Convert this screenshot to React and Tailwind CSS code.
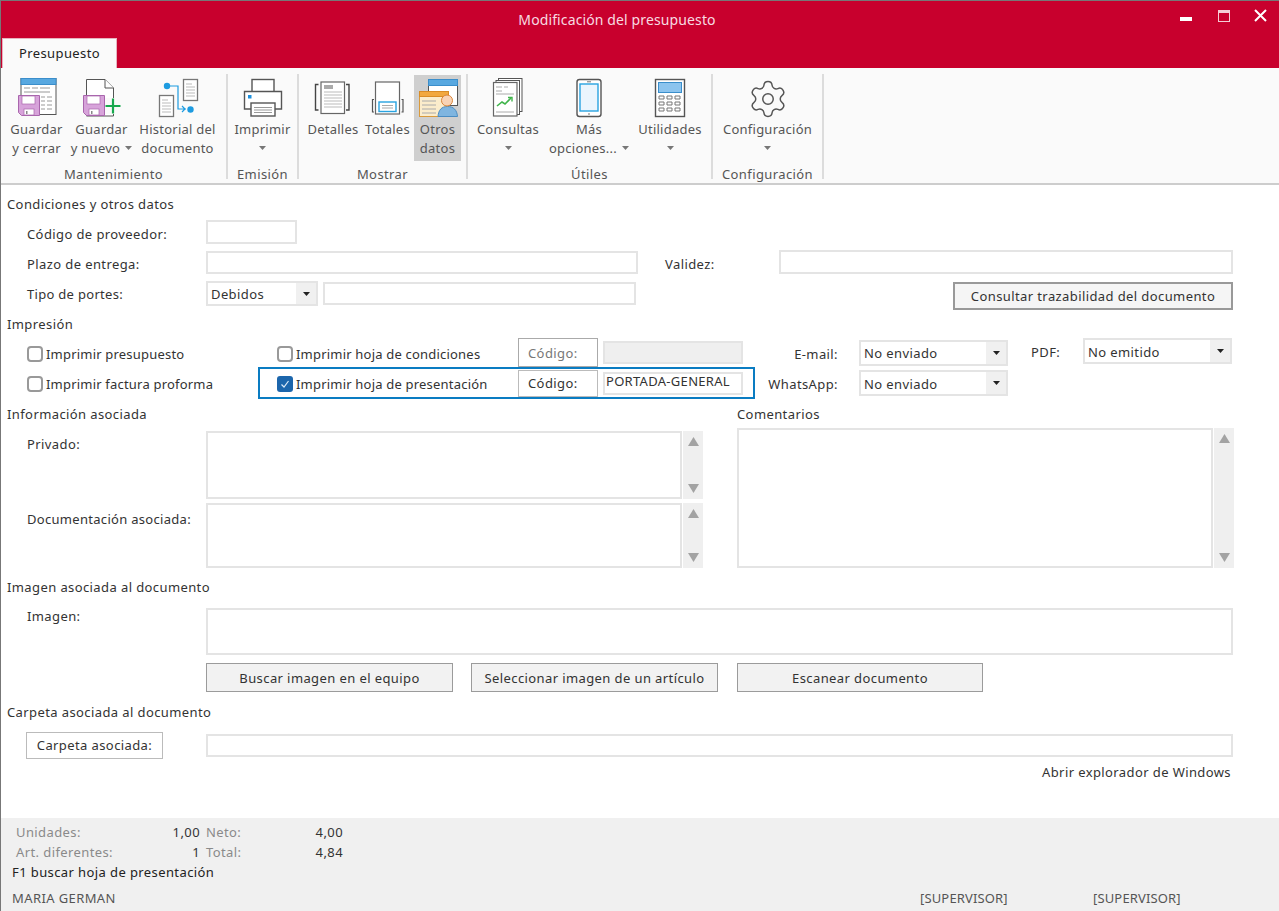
import React from "react";
import { Settings } from "lucide-react";

// --- ribbon icons, all drawn on a 44x44 box ---
const Floppy = ({ x = 3, y = 20 }) => (
  <g transform={`translate(${x} ${y})`}>
    <path d="M0.5 0.5H21.5V20.5H3.5L0.5 17.5Z" fill="#d7a3da" stroke="#a966ad" />
    <rect x="4" y="1" width="13" height="8" fill="#fff" stroke="#a966ad" strokeWidth="0.7" />
    <rect x="6" y="14" width="10" height="6" fill="#fff" stroke="#a966ad" strokeWidth="0.7" />
    <rect x="8" y="16" width="1.5" height="3" fill="#888" />
  </g>
);

const SaveCloseIcon = () => (
  <svg width="44" height="44" viewBox="0 0 44 44">
    <rect x="6" y="3.5" width="35" height="36" fill="#fff" stroke="#555" />
    <rect x="6" y="3.5" width="35" height="6" fill="#58a8e0" stroke="#3b8ecb" />
    <path d="M9 13h6M17 13h6M25 13h10M9 17h26M26 22h4M32 22h5M26 26h4M32 26h5M26 30h4M32 30h5M26 34h4M32 34h5" stroke="#999" strokeWidth="1" />
    <Floppy />
  </svg>
);

const SaveNewIcon = () => (
  <svg width="44" height="44" viewBox="0 0 44 44">
    <path d="M6.5 4.5H25L33.5 13V41H6.5Z" fill="#fff" stroke="#555" />
    <path d="M25 4.5V13H33.5" fill="#fff" stroke="#555" />
    <Floppy x={3} y={20} />
    <rect x="25" y="23" width="17" height="16" fill="#fafafa" />
    <path d="M33 23.5V38.5M25.5 31H40.5" stroke="#18a84e" strokeWidth="2.2" />
  </svg>
);

const HistoryIcon = () => (
  <svg width="44" height="44" viewBox="0 0 44 44">
    <rect x="27.5" y="4.5" width="14" height="21" fill="#fff" stroke="#777" strokeWidth="1.3" />
    <path d="M30 9h6M30 12h9M30 15h9M30 18h9M30 21h9" stroke="#bbb" />
    <rect x="3.5" y="20.5" width="14" height="21" fill="#fff" stroke="#777" strokeWidth="1.3" />
    <path d="M6 25h6M6 28h9M6 31h9M6 34h9M6 37h9" stroke="#bbb" />
    <circle cx="11" cy="11" r="3.2" fill="#1d9be0" />
    <path d="M13 11H22V34H30M26 31l3 3-3 3" fill="none" stroke="#1d9be0" strokeWidth="1.2" />
    <circle cx="34.5" cy="34.5" r="3.2" fill="#1d9be0" />
  </svg>
);

const PrinterIcon = () => (
  <svg width="44" height="44" viewBox="0 0 44 44">
    <rect x="11" y="4.5" width="22" height="14" fill="#fff" stroke="#555" strokeWidth="1.4" />
    <path d="M3.5 16.5H40.5V34H3.5Z" fill="#fff" stroke="#555" strokeWidth="1.4" />
    <rect x="7" y="20" width="3.5" height="3.5" fill="#1d8fdc" />
    <rect x="10" y="28" width="24" height="13" fill="#fff" stroke="#555" strokeWidth="1.4" />
    <path d="M13 32.5H31M13 35H31M13 37.5H31" stroke="#999" />
  </svg>
);

const DetailsIcon = () => (
  <svg width="44" height="44" viewBox="0 0 44 44">
    <path d="M7.5 9.5H4.5V35H7.5M35 9.5H38V35H35" fill="none" stroke="#444" strokeWidth="1.4" />
    <rect x="10" y="7" width="23.5" height="31.5" fill="#fff" stroke="#666" strokeWidth="1.2" />
    <rect x="13" y="10" width="9" height="4" fill="#aaa" />
    <path d="M13 17H31M13 20H31M13 23H31M13 26H31M13 29H31M13 32H31" stroke="#bbb" />
  </svg>
);

const TotalsIcon = () => (
  <svg width="44" height="44" viewBox="0 0 44 44">
    <rect x="9.5" y="7" width="24" height="32" fill="#fff" stroke="#666" strokeWidth="1.2" />
    <path d="M8 24.5H6.5V37H8M35.5 24.5H37V37H35.5" fill="none" stroke="#555" strokeWidth="1.2" />
    <rect x="13" y="27" width="17" height="9.5" fill="#fff" stroke="#29a3e0" strokeWidth="1.4" />
    <path d="M16 30.5H27M16 33H27" stroke="#aaa" />
  </svg>
);

const OtherDataIcon = () => (
  <svg width="44" height="44" viewBox="0 0 44 44">
    <rect x="12.5" y="4.5" width="29" height="26" fill="#fff" stroke="#555" />
    <rect x="12.5" y="4.5" width="29" height="6" fill="#58a8e0" stroke="#3b8ecb" />
    <rect x="3.5" y="16.5" width="29" height="25" fill="#fbeccb" stroke="#d99a3c" />
    <rect x="3.5" y="16.5" width="29" height="5" fill="#f2a83e" stroke="#d98c25" />
    <path d="M6 26h14M6 30h14M6 34h14M6 38h14" stroke="#aaa" />
    <path d="M22 41.5C22.5 35 25.5 31.5 31.5 31.5S41 35 41.5 41.5Z" fill="#7fb5e0" stroke="#4a8cc2" />
    <circle cx="31" cy="25.5" r="5.5" fill="#f9d3b5" stroke="#d9853a" />
  </svg>
);

const ReportsIcon = () => (
  <svg width="44" height="44" viewBox="0 0 44 44">
    <rect x="12.5" y="3.5" width="23.5" height="33" fill="#fff" stroke="#555" />
    <rect x="10" y="5.5" width="23.5" height="34" fill="#fff" stroke="#555" />
    <rect x="7.5" y="7.5" width="23.5" height="33.5" fill="#fff" stroke="#666" strokeWidth="1.2" />
    <path d="M10 12h6M18 12h4M10 16h6M10 19h18M10 37h18" stroke="#aaa" />
    <path d="M11 31l5-4 3 2 6-6" fill="none" stroke="#3fb44a" strokeWidth="1.6" />
    <path d="M22 22.5h4v4" fill="none" stroke="#3fb44a" strokeWidth="1.4" />
  </svg>
);

const PhoneIcon = () => (
  <svg width="44" height="44" viewBox="0 0 44 44">
    <rect x="10" y="4.5" width="24" height="37" rx="2.5" fill="#fff" stroke="#555" strokeWidth="1.4" />
    <rect x="13" y="9" width="18" height="27" fill="#eaf5fd" stroke="#29a3e0" strokeWidth="1.4" />
    <path d="M20 6.8H24M21 39H23" stroke="#777" />
  </svg>
);

const CalculatorIcon = () => (
  <svg width="44" height="44" viewBox="0 0 44 44">
    <rect x="7.5" y="4.5" width="29" height="37" fill="#fff" stroke="#555" strokeWidth="1.4" />
    <rect x="10.5" y="7.5" width="23" height="10" fill="#8cc4ee" stroke="#3a8ecb" />
    <path
      d="M11 21h5v3h-5zM19 21h5v3h-5zM27 21h5v3h-5zM11 27h5v3h-5zM19 27h5v3h-5zM27 27h5v3h-5zM11 33h5v3h-5zM19 33h5v3h-5zM27 33h5v3h-5z"
      fill="#fff"
      stroke="#777"
    />
  </svg>
);

const GearIcon = () => (
  <div className="flex h-[44px] w-[44px] items-center justify-center pt-[3px]">
    <Settings size={42} strokeWidth={0.85} color="#555" />
  </div>
);

const Caret = ({ className = "" }) => (
  <svg width="7" height="4" viewBox="0 0 7 4" className={className}>
    <path d="M0 0H7L3.5 4Z" fill="#777" />
  </svg>
);

const RibbonButton = ({ icon, lines, caret, inlineCaret, active, width }) => (
  <div
    className={`flex h-[86px] flex-col items-center ${active ? "bg-[#cfcfcf]" : ""}`}
    style={{ width }}
  >
    <div className="h-[44px] shrink-0">{icon}</div>
    {lines.map((line, i) => (
      <div key={line} className="flex h-[19px] items-center gap-[5px] whitespace-nowrap pt-px leading-[18px] tracking-[0.25px] text-[#555]">
        {line}
        {inlineCaret && i === 1 && <Caret />}
      </div>
    ))}
    {caret && (
      <div className="flex h-[19px] items-center">
        <Caret />
      </div>
    )}
  </div>
);

const RibbonGroup = ({ label, width, pad, children }) => (
  <div className="flex h-[105px] flex-col border-r-2 border-[#dcdcdc]" style={{ width, paddingLeft: pad }}>
    <div className="flex pt-px">{children}</div>
    <div className="mt-[4px] text-center leading-[19px] text-[#555]" style={{ marginLeft: -pad }}>
      {label}
    </div>
  </div>
);

const Heading = ({ children, className = "" }) => (
  <div className={`h-[18px] whitespace-nowrap pl-[6px] pt-px leading-[17px] text-[#333] ${className}`}>{children}</div>
);

const Input = ({ className = "", children }) => (
  <div className={`flex items-center border-2 border-[#e4e4e4] bg-white px-[1px] ${className}`}>{children}</div>
);

const Select = ({ value, className = "" }) => (
  <div className={`flex items-stretch border-2 border-[#e4e4e4] bg-white ${className}`}>
    <div className="flex flex-1 items-center pl-[3px] pt-[3px] text-[#333]">{value}</div>
    <div className="flex w-[20px] items-center justify-center bg-[#f0f0f0]">
      <svg width="7" height="4" viewBox="0 0 7 4">
        <path d="M0 0H7L3.5 4Z" fill="#222" />
      </svg>
    </div>
  </div>
);

const Check = ({ checked, label, className = "" }) => (
  <div className={`flex items-center gap-[3px] whitespace-nowrap pt-[2px] tracking-[0.2px] text-[#333] ${className}`}>
    {checked ? (
      <div className="flex h-[16px] w-[16px] items-center justify-center rounded-[3px] bg-[#1c66ac]">
        <svg width="10" height="10" viewBox="0 0 10 10">
          <path d="M1.5 5.5L4 8L8.5 2" fill="none" stroke="#dcebf8" strokeWidth="1.2" />
        </svg>
      </div>
    ) : (
      <div className="h-[16px] w-[16px] rounded-[4px] border-2 border-[#999] bg-white" />
    )}
    <span className="pt-[2px]">{label}</span>
  </div>
);

const Scrollbar = ({ className = "" }) => (
  <div className={`ml-px flex w-[20px] flex-col items-center justify-between bg-[#efefef] py-[6px] ${className}`}>
    <svg width="11" height="9" viewBox="0 0 11 9">
      <path d="M5.5 0L11 9H0Z" fill="#a3a3a3" />
    </svg>
    <svg width="11" height="9" viewBox="0 0 11 9">
      <path d="M0 0H11L5.5 9Z" fill="#a3a3a3" />
    </svg>
  </div>
);

const GrayButton = ({ children, className = "" }) => (
  <div className={`flex h-[29px] items-center justify-center border border-[#9b9b9b] bg-[#f2f2f2] pt-[2px] text-[#333] ${className}`}>
    {children}
  </div>
);

const App = () => {
  return (
    <div className="flex h-[911px] w-[1279px] flex-col overflow-hidden border-l border-t border-[#777] bg-white font-['Noto_Sans',sans-serif] text-[13px] tracking-[0.4px]">
      {/* Title bar */}
      <div className="relative h-[67px] shrink-0 bg-[#c8002d]">
        <div className="pr-[46px] pt-[9px] text-center text-[14px] leading-[20px] tracking-[0.12px] text-[#f7dbe1]">Modificación del presupuesto</div>
        <div className="absolute left-[1px] top-[37px] flex h-[30px] w-[115px] items-center justify-center border-l border-r border-t border-[#e6b3bf] bg-[#fafafa] text-[#222]">
          Presupuesto
        </div>
        <div className="absolute left-[1179px] top-[16px] h-[4px] w-[12px] bg-white" />
        <div className="absolute left-[1217px] top-[9px] h-[12px] w-[12px] border border-t-[3px] border-[#f5ccd5]" />
        <svg className="absolute left-[1253px] top-[8px]" width="13" height="13" viewBox="0 0 13 13">
          <path d="M1 1L12 12M12 1L1 12" stroke="#fff" strokeWidth="2" />
        </svg>
      </div>

      {/* Ribbon */}
      <div className="flex h-[117px] shrink-0 border-b-2 border-[#cdcdcd] bg-[#fafafa] pt-[6px]">
        <RibbonGroup label="Mantenimiento" width={227} pad={3}>
          <RibbonButton width={65} icon={<SaveCloseIcon />} lines={["Guardar", "y cerrar"]} />
          <RibbonButton width={65} icon={<SaveNewIcon />} lines={["Guardar", "y nuevo"]} inlineCaret />
          <RibbonButton width={87} icon={<HistoryIcon />} lines={["Historial del", "documento"]} />
        </RibbonGroup>
        <RibbonGroup label="Emisión" width={71} pad={0}>
          <RibbonButton width={69} icon={<PrinterIcon />} lines={["Imprimir"]} caret />
        </RibbonGroup>
        <RibbonGroup label="Mostrar" width={169} pad={6}>
          <RibbonButton width={56} icon={<DetailsIcon />} lines={["Detalles"]} />
          <RibbonButton width={53} icon={<TotalsIcon />} lines={["Totales"]} />
          <RibbonButton width={47} icon={<OtherDataIcon />} lines={["Otros", "datos"]} active />
        </RibbonGroup>
        <RibbonGroup label="Útiles" width={245} pad={0}>
          <RibbonButton width={80} icon={<ReportsIcon />} lines={["Consultas"]} caret />
          <RibbonButton width={82} icon={<PhoneIcon />} lines={["Más", "opciones..."]} inlineCaret />
          <RibbonButton width={80} icon={<CalculatorIcon />} lines={["Utilidades"]} caret />
        </RibbonGroup>
        <RibbonGroup label="Configuración" width={111} pad={0}>
          <RibbonButton width={109} icon={<GearIcon />} lines={["Configuración"]} caret />
        </RibbonGroup>
      </div>

      {/* Form */}
      <div className="flex-1 pt-[10px]">
        <Heading>Condiciones y otros datos</Heading>
        <div className="mt-[7px] flex h-[24px] items-center pl-[26px] text-[#333]">
          <div className="w-[179px] pt-[6px]">Código de proveedor:</div>
          <Input className="h-[24px] w-[91px]" />
        </div>
        <div className="mt-[6px] flex h-[24px] items-center pl-[26px] text-[#333]">
          <div className="w-[179px] pt-[6px]">Plazo de entrega:</div>
          <Input className="h-[23px] w-[432px]" />
          <div className="ml-[27px] w-[114px] pt-[6px]">Validez:</div>
          <Input className="h-[24px] w-[454px]" />
        </div>
        <div className="mt-[7px] flex h-[29px] items-start pl-[26px] text-[#333]">
          <div className="flex h-[25px] w-[179px] items-center pt-[2px] tracking-[0.3px]">Tipo de portes:</div>
          <Select value="Debidos" className="h-[25px] w-[112px]" />
          <Input className="ml-[5px] mt-px h-[23px] w-[313px]" />
          <div className="ml-[317px] mt-px flex h-[28px] w-[280px] items-center justify-center border-2 border-[#999] bg-[#f5f5f5] pt-[2px]">
            Consultar trazabilidad del documento
          </div>
        </div>

        <Heading className="mt-[5px]">Impresión</Heading>
        <div className="mt-[5px] flex h-[29px] items-center pl-[26px] text-[#333]">
          <Check label="Imprimir presupuesto" className="w-[250px]" />
          <Check label="Imprimir hoja de condiciones" className="w-[241px]" />
          <div className="flex h-[29px] w-[80px] items-center border border-[#aaa] pl-[9px] pt-[2px] text-[#777]">Código:</div>
          <div className="ml-[5px] h-[23px] w-[140px] border-2 border-[#e4e4e4] bg-[#efefef]" />
          <div className="w-[95px] pt-[4px] text-right">E-mail:</div>
          <Select value="No enviado" className="ml-[21px] h-[26px] w-[149px]" />
          <div className="ml-[23px] w-[52px] self-start pt-[5px]">PDF:</div>
          <Select value="No emitido" className="h-[26px] w-[149px] self-start" />
        </div>
        <div className="flex h-[32px] items-center pl-[26px] text-[#333]">
          <Check label="Imprimir factura proforma" className="w-[231px]" />
          <div className="flex h-[32px] w-[497px] items-center border-2 border-[#0a7cc2] pl-[17px]">
            <Check checked label="Imprimir hoja de presentación" className="w-[241px]" />
            <div className="flex h-[27px] w-[80px] items-center border border-[#bbb] pl-[9px] pt-[2px]">Código:</div>
            <Input className="ml-[5px] h-[23px] w-[140px] pb-[2px] pl-[1px] tracking-[0.3px]">PORTADA-GENERAL</Input>
          </div>
          <div className="w-[83px] pt-[4px] text-right">WhatsApp:</div>
          <Select value="No enviado" className="ml-[21px] h-[26px] w-[149px]" />
        </div>

        <div className="mt-[6px] flex h-[163px] text-[#333]">
          <div className="w-[702px]">
            <Heading>Información asociada</Heading>
            <div className="mt-[8px] flex h-[68px] pl-[26px]">
              <div className="w-[179px] pt-[4px]">Privado:</div>
              <Input className="w-[476px]" />
              <Scrollbar />
            </div>
            <div className="mt-[4px] flex h-[65px] pl-[26px]">
              <div className="w-[179px] pt-[7px] tracking-[0.3px]">Documentación asociada:</div>
              <Input className="w-[476px]" />
              <Scrollbar />
            </div>
          </div>
          <div className="pl-[34px]">
            <div className="h-[18px] pt-px leading-[17px]">Comentarios</div>
            <div className="mt-[5px] flex h-[140px]">
              <Input className="w-[476px]" />
              <Scrollbar />
            </div>
          </div>
        </div>

        <Heading className="mt-[10px]">Imagen asociada al documento</Heading>
        <div className="mt-[12px] flex h-[47px] pl-[26px] text-[#333]">
          <div className="w-[179px] leading-[17px]">Imagen:</div>
          <Input className="w-[1027px]" />
        </div>
        <div className="ml-[205px] mt-[8px] flex">
          <GrayButton className="w-[247px]">Buscar imagen en el equipo</GrayButton>
          <GrayButton className="ml-[18px] w-[247px]">Seleccionar imagen de un artículo</GrayButton>
          <GrayButton className="ml-[19px] w-[246px]">Escanear documento</GrayButton>
        </div>

        <Heading className="mt-[11px]">Carpeta asociada al documento</Heading>
        <div className="mt-[11px] flex h-[27px] items-center pl-[25px] text-[#333]">
          <div className="flex h-[27px] w-[137px] items-center justify-center border border-[#bbb] bg-white">Carpeta asociada:</div>
          <Input className="ml-[43px] h-[23px] w-[1027px]" />
        </div>
        <div className="mt-[4px] h-[18px] w-[1230px] pt-px text-right leading-[17px] text-[#333]">Abrir explorador de Windows</div>
      </div>

      {/* Totals and status */}
      <div className="h-[93px] shrink-0 bg-[#f0f0f0] pt-[5px] text-[#333]">
        <div className="flex h-[20px] items-center pl-[15px]">
          <div className="w-[110px] text-[#8a8a8a]">Unidades:</div>
          <div className="w-[74px] text-right">1,00</div>
          <div className="ml-[6px] w-[60px] text-[#8a8a8a]">Neto:</div>
          <div className="w-[77px] text-right">4,00</div>
        </div>
        <div className="flex h-[20px] items-center pl-[15px]">
          <div className="w-[110px] text-[#8a8a8a]">Art. diferentes:</div>
          <div className="w-[74px] text-right">1</div>
          <div className="ml-[6px] w-[60px] text-[#8a8a8a]">Total:</div>
          <div className="w-[77px] text-right">4,84</div>
        </div>
        <div className="flex h-[20px] items-center pl-[11px] text-[#222]">F1 buscar hoja de presentación</div>
        <div className="mt-[6px] flex h-[20px] items-center pl-[11px] text-[#555]">
          <div className="w-[908px]">MARIA GERMAN</div>
          <div className="w-[173px] tracking-[0.15px]">[SUPERVISOR]</div>
          <div className="tracking-[0.15px]">[SUPERVISOR]</div>
        </div>
      </div>
    </div>
  );
};

export default App;
